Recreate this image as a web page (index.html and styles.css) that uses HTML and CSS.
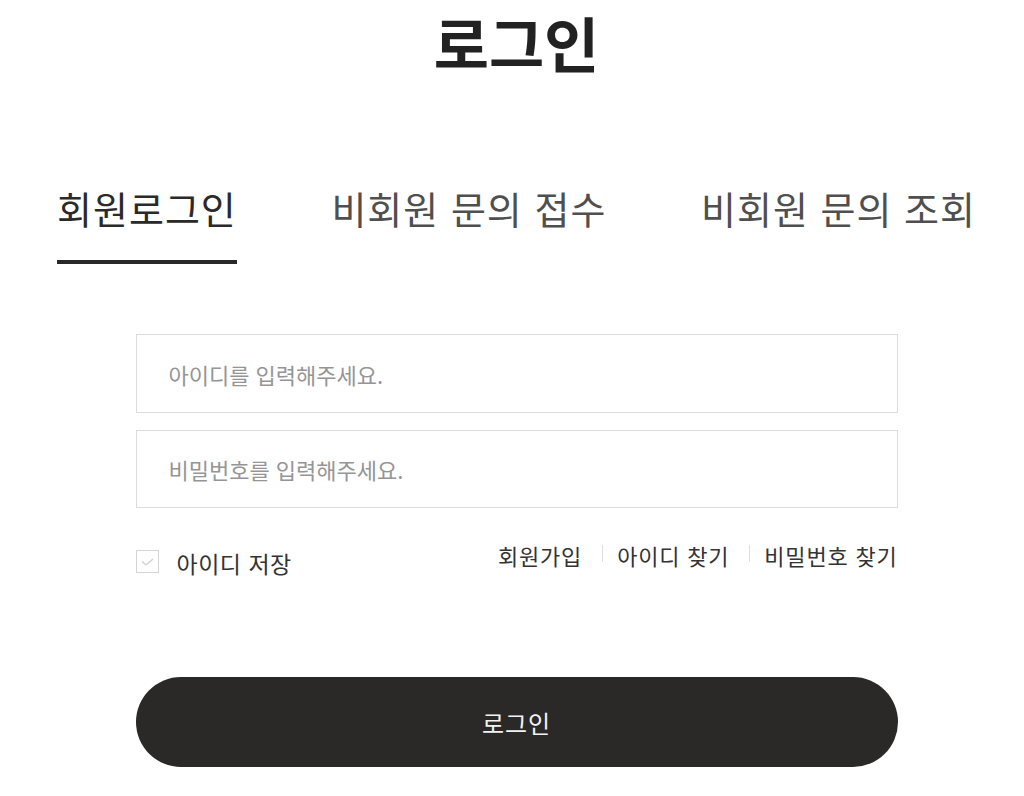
FILE: index.html
```html
<!DOCTYPE html>
<html lang="ko">
<head>
<meta charset="utf-8">
<title>로그인</title>
<link rel="stylesheet" href="styles.css">
</head>
<body>
<div class="page">
  <h1 class="title">로그인</h1>
  <nav class="tabs">
    <a class="tab tab-active" href="#">회원로그인</a>
    <a class="tab" href="#">비회원 문의 접수</a>
    <a class="tab" href="#">비회원 문의 조회</a>
  </nav>
  <form class="form">
    <input class="field" type="text" placeholder="아이디를 입력해주세요.">
    <input class="field" type="password" placeholder="비밀번호를 입력해주세요.">
    <div class="options">
      <label class="save">
        <span class="checkbox">
          <svg width="13" height="8" viewBox="0 0 13 8"><path d="M1 3.5 L5 7 L12 1" fill="none" stroke="#cfcfcf" stroke-width="1.3"/></svg>
        </span>
        <span class="save-text">아이디 저장</span>
      </label>
      <div class="links">
        <a class="link" href="#">회원가입</a>
        <span class="sep"></span>
        <a class="link" href="#">아이디 찾기</a>
        <span class="sep"></span>
        <a class="link" href="#">비밀번호 찾기</a>
      </div>
    </div>
    <button class="submit" type="button">로그인</button>
  </form>
</div>
</body>
</html>
```
FILE: styles.css
```css
html, body {
  margin: 0;
  padding: 0;
  background: #fff;
}
body {
  font-family: "Noto Sans CJK KR", "Noto Sans", sans-serif;
  color: #222;
}
.page {
  padding-left: 9px;
  padding-top: 6px;
}
.title {
  margin: 0;
  font-size: 60px;
  line-height: 72px;
  font-weight: 700;
  letter-spacing: 0;
  text-align: center;
  color: #222;
}
.tabs {
  width: 919px;
  margin: 111px auto 0;
  display: flex;
  justify-content: space-between;
  align-items: baseline;
}
.tab {
  text-decoration: none;
  color: #4f4f4f;
  font-size: 38px;
  line-height: 38px;
  letter-spacing: 1px;
  padding-bottom: 33px;
  border-bottom: 4px solid transparent;
  white-space: nowrap;
}
.tab-active {
  color: #2a2a2a;
  border-bottom-color: #2b2927;
}
.form {
  width: 762px;
  margin: 70px auto 0;
  display: flex;
  flex-direction: column;
}
.field {
  box-sizing: border-box;
  height: 79px;
  border: 1px solid #dcdcdc;
  padding: 0 0 0 32px;
  font-family: "Noto Sans CJK KR", sans-serif;
  font-size: 22px;
  letter-spacing: 0;
  color: #333;
  outline: none;
  margin: 0;
}
.field + .field {
  margin-top: 17px;
  height: 78px;
}
.field::placeholder {
  color: #959595;
}
.options {
  margin-top: 37px;
  height: 32px;
  display: flex;
  justify-content: space-between;
  align-items: flex-start;
}
.save {
  margin-top: 5px;
  display: flex;
  align-items: flex-start;
}
.checkbox {
  box-sizing: border-box;
  width: 23px;
  height: 23px;
  border: 1px solid #d4d4d4;
  display: flex;
  align-items: center;
  justify-content: center;
}
.save-text {
  margin-left: 18px;
  margin-top: 2px;
  font-size: 23px;
  line-height: 23px;
  letter-spacing: 0.5px;
  color: #333;
}
.links {
  display: flex;
  align-items: flex-start;
  margin-top: -1px;
}
.link {
  text-decoration: none;
  color: #333;
  font-size: 22px;
  line-height: 22px;
  letter-spacing: 0.8px;
}
.sep {
  width: 1px;
  height: 17px;
  margin: 1px 14px 0 20px;
  background: #dedede;
}
.submit {
  margin-top: 100px;
  height: 90px;
  border: none;
  border-radius: 45px;
  background: #2b2927;
  color: #f2f2f2;
  font-family: "Noto Sans CJK KR", sans-serif;
  font-size: 24px;
  letter-spacing: 1px;
  cursor: pointer;
}
```
